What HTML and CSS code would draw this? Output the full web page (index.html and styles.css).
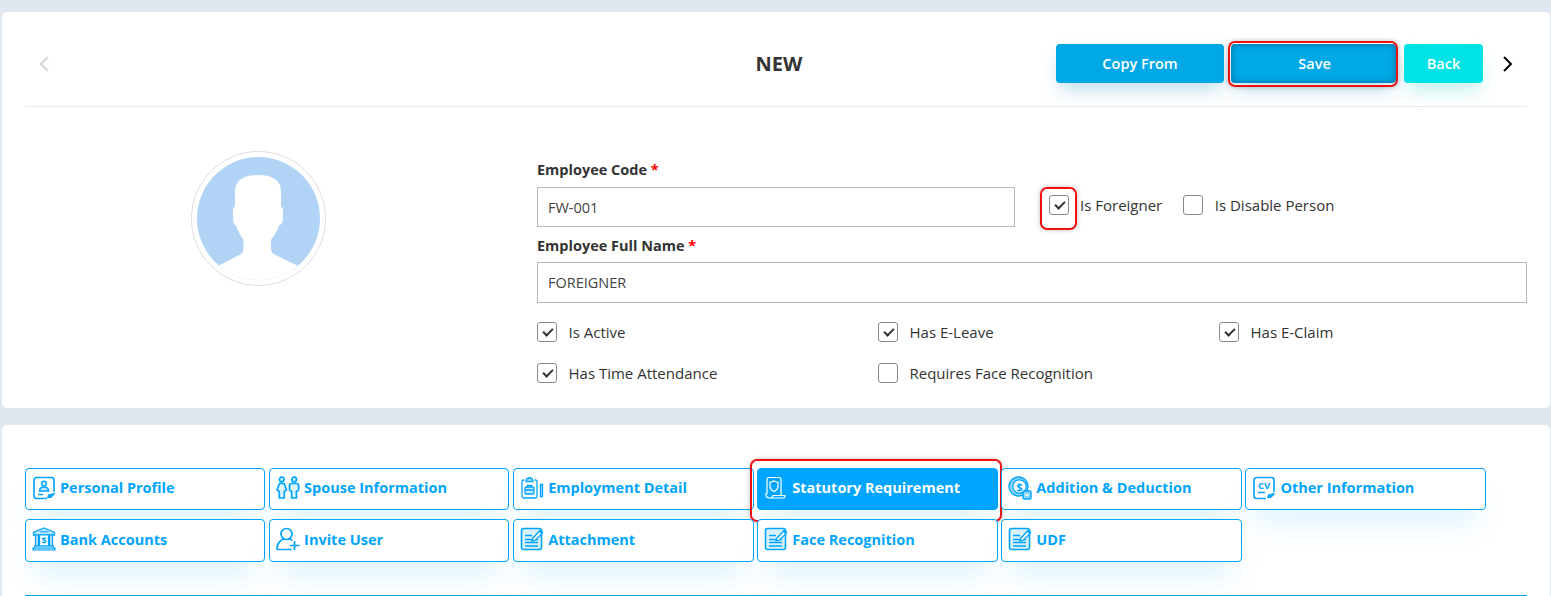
FILE: index.html
```html
<!DOCTYPE html>
<html lang="en">
<head>
    <meta charset="UTF-8">
    <meta name="viewport" content="width=device-width, initial-scale=1.0">
    <title>New Employee</title>
    <link rel="stylesheet" href="styles.css">
</head>
<body>
    <svg class="sprite" xmlns="http://www.w3.org/2000/svg">
        <symbol id="ic-note" viewBox="0 0 24 24">
            <rect x="1.500" y="1.500" width="20" height="21" rx="2" fill="#bfe6ff" fill-opacity=".6" stroke="currentColor" stroke-width="1.600"/>
            <path d="M5 8.500h7M5 12.500h13M5 15.500h13M5 19h13" fill="none" stroke="currentColor" stroke-width="1.600"/>
            <path d="M13 11l7-7.500 2.500 2.500-7 7-3.500 1z" fill="#fff" stroke="currentColor" stroke-width="1.300"/>
            <path d="M19 4.500l2.500 2.500 1.500-2-2-2z" fill="currentColor"/>
        </symbol>
        <symbol id="ic-person" viewBox="0 0 24 24">
            <path d="M15 22.500H4.500A2.500 2.500 0 0 1 2 20V4a2.500 2.500 0 0 1 2.500-2.500h15A2.500 2.500 0 0 1 22 4v12" fill="none" stroke="currentColor" stroke-width="1.600"/>
            <circle cx="12" cy="7.500" r="2.300" fill="none" stroke="currentColor" stroke-width="1.500"/>
            <path d="M7.500 15c0-3 1.800-4 4.500-4s4.500 1 4.500 4z" fill="#bfe6ff" stroke="currentColor" stroke-width="1.500"/>
            <path d="M6 18.500h5" stroke="currentColor" stroke-width="1.500"/>
            <path d="M15 22l1-3.500 6-1.500 1.500 0-1.500 2-3 3z" fill="currentColor"/>
        </symbol>
        <symbol id="ic-couple" viewBox="0 0 24 24">
            <g fill="#dff3ff" stroke="currentColor" stroke-width="1.700">
                <circle cx="5.800" cy="3.500" r="2.300"/>
                <circle cx="18.200" cy="3.500" r="2.300"/>
                <path d="M3.500 7.500h4.600L10.500 14 8.300 15.500V22H3.300V15.500L1 14z"/>
                <path d="M15.800 7.500h4.600c1.200 0 2.200 1 2.200 2v4.500l-2.200 1.500V22h-4.800V15.500L13.500 14V9.500c0-1 1-2 2.300-2z"/>
            </g>
        </symbol>
        <symbol id="ic-clipboard" viewBox="0 0 24 24">
            <g fill="none" stroke="currentColor" stroke-width="1.300">
                <path d="M4.500 4h-1A1.500 1.500 0 0 0 2 5.500v15A1.500 1.500 0 0 0 3.500 22h12a1.500 1.500 0 0 0 1.500-1.500v-15A1.500 1.500 0 0 0 15.500 4h-1"/>
                <path d="M6 5.500L7 2.500h1.500a1 1 0 0 1 2 0H12l1 3z" fill="#bfe6ff"/>
                <rect x="5" y="11" width="9" height="7" rx="1" fill="#bfe6ff"/>
                <path d="M7.500 11V9.500h4V11M5 14h9"/>
                <path d="M20.500 8.500h2v12h-2z" fill="#bfe6ff"/>
            </g>
        </symbol>
        <symbol id="ic-scroll" viewBox="0 0 24 24">
            <g fill="none" stroke="currentColor" stroke-width="1.200">
                <path d="M3 18V3.500a2 2 0 0 1 2-2h10a2 2 0 0 1 2 2V19"/>
                <path d="M6 22h13c1.500 0 2-1 2-2.500H9c0 1.500-.8 2.500-3 2.500S2 21 2 19v-1.500h1"/>
                <path d="M10 5l4 1.500v3.500c0 2.800-1.800 4.500-4 5.500-2.200-1-4-2.700-4-5.500V6.500z"/>
            </g>
        </symbol>
        <symbol id="ic-coin" viewBox="0 0 24 24">
            <circle cx="10.500" cy="10.500" r="9.500" fill="#8fd3ff" stroke="currentColor" stroke-width="1.400"/>
            <circle cx="11.500" cy="10.500" r="6.700" fill="#fff" stroke="currentColor" stroke-width="1.200"/>
            <text x="11.500" y="14.500" class="ic-glyph" text-anchor="middle">$</text>
            <rect x="15" y="15" width="8" height="8" rx="1.200" fill="#8fd3ff" stroke="currentColor" stroke-width="1.400"/>
            <path d="M17 19h4" stroke="#fff" stroke-width="1.200"/>
        </symbol>
        <symbol id="ic-cv" viewBox="0 0 24 24">
            <path d="M14 22.500H4.500A2.500 2.500 0 0 1 2 20V4a2.500 2.500 0 0 1 2.500-2.500h15A2.500 2.500 0 0 1 22 4v12" fill="none" stroke="currentColor" stroke-width="1.600"/>
            <text x="12" y="12.500" class="ic-cv-text" text-anchor="middle">CV</text>
            <path d="M6 16.500h7" stroke="currentColor" stroke-width="1.500"/>
            <path d="M15 22l1-3.500 6-1.500 1.500 0-1.500 2-3 3z" fill="currentColor"/>
        </symbol>
        <symbol id="ic-bank" viewBox="0 0 24 24">
            <path d="M12 1L22.500 5.500V8h-21V5.500z" fill="#bfe6ff" stroke="currentColor" stroke-width="1.300"/>
            <path d="M8 4.800h8" stroke="currentColor" stroke-width="1"/>
            <path d="M3.500 8h3v11h-3zM17.500 8h3v11h-3z" fill="#bfe6ff" stroke="currentColor" stroke-width="1.200"/>
            <path d="M7.500 8h9v11h-9z" fill="#fff" stroke="currentColor" stroke-width="1.200"/>
            <text x="12" y="16.500" class="ic-glyph ic-glyph-sm" text-anchor="middle">$</text>
            <path d="M2.500 19h19v2h-19zM1 21h22v2H1z" fill="#bfe6ff" stroke="currentColor" stroke-width="1.200"/>
        </symbol>
        <symbol id="ic-invite" viewBox="0 0 24 24">
            <g fill="none" stroke="currentColor" stroke-width="1.700">
                <circle cx="10.500" cy="7" r="5.500"/>
                <path d="M15.500 22.500H2c-.6 0-1-.4-1-1 0-5 3.500-8.800 7-9.500M13 12c1 .2 2 .7 3 1.500"/>
                <path d="M18.500 14v9M14 18.500h9.500"/>
            </g>
        </symbol>
    </svg>

    <section class="card top-card">
        <div class="page-head">
            <div class="head-left">
                <svg class="chev chev-prev" viewBox="0 0 10 16"><path d="M9 1L2 8l7 7"/></svg>
            </div>
            <h1 class="page-title">NEW</h1>
            <div class="head-actions">
                <button class="btn btn-blue btn-copy">Copy From</button>
                <button class="btn btn-blue btn-save">Save<span class="mark"></span></button>
                <button class="btn btn-cyan">Back</button>
                <svg class="chev chev-next" viewBox="0 0 10 16"><path d="M1 1l7 7-7 7"/></svg>
            </div>
        </div>

        <div class="emp-form">
            <div class="photo-col">
                <svg class="avatar" viewBox="191 151 135 135">
                    <circle cx="258.500" cy="218.500" r="67" fill="#fff" stroke="#dedede"/>
                    <clipPath id="avatar-clip"><circle cx="258.500" cy="218.500" r="61.500"/></clipPath>
                    <circle cx="258.500" cy="218.500" r="61.500" fill="#b1d3f5"/>
                    <path clip-path="url(#avatar-clip)" fill="#fff" d="M218 266L240 254.500Q243.500 252.500 243.500 248.500L243.500 240Q238 232 236 225.500Q233 224 233 218L233 212Q233 208 235 206L235 192Q235 175 258 175Q281 175 281 192L281 206Q283 208 283 212L283 218Q283 224 279 225.500Q277 232 271 240L271 248.500Q271 252.500 274.500 254.500L298 266L298 295L218 295Z"/>
                </svg>
            </div>
            <div class="field-col">
                <div class="code-row">
                    <div class="field field-code">
                        <label class="field-label">Employee Code <span class="req">*</span></label>
                        <input class="text-input" type="text" value="FW-001">
                    </div>
                    <div class="code-flags">
                        <label class="chk"><span class="chk-box-wrap"><input type="checkbox" checked><span class="mark"></span></span>Is Foreigner</label>
                        <label class="chk chk-wide"><input type="checkbox">Is Disable Person</label>
                    </div>
                </div>
                <div class="field field-name">
                    <label class="field-label">Employee Full Name <span class="req">*</span></label>
                    <input class="text-input text-input-tall" type="text" value="FOREIGNER">
                </div>
                <div class="flag-grid">
                    <label class="chk chk-wide"><input type="checkbox" checked>Is Active</label>
                    <label class="chk chk-wide"><input type="checkbox" checked>Has E-Leave</label>
                    <label class="chk chk-wide"><input type="checkbox" checked>Has E-Claim</label>
                    <label class="chk chk-wide"><input type="checkbox" checked>Has Time Attendance</label>
                    <label class="chk chk-wide"><input type="checkbox">Requires Face Recognition</label>
                </div>
            </div>
        </div>
    </section>

    <section class="card tab-card">
        <div class="tab-grid">
            <a class="tab"><svg class="tab-ic"><use href="#ic-person"/></svg>Personal Profile</a>
            <a class="tab"><svg class="tab-ic"><use href="#ic-couple"/></svg>Spouse Information</a>
            <a class="tab"><svg class="tab-ic"><use href="#ic-clipboard"/></svg>Employment Detail</a>
            <a class="tab tab-active"><svg class="tab-ic"><use href="#ic-scroll"/></svg>Statutory Requirement<span class="mark"></span></a>
            <a class="tab"><svg class="tab-ic"><use href="#ic-coin"/></svg>Addition &amp; Deduction</a>
            <a class="tab"><svg class="tab-ic"><use href="#ic-cv"/></svg>Other Information</a>
            <a class="tab"><svg class="tab-ic"><use href="#ic-bank"/></svg>Bank Accounts</a>
            <a class="tab"><svg class="tab-ic"><use href="#ic-invite"/></svg>Invite User</a>
            <a class="tab"><svg class="tab-ic"><use href="#ic-note"/></svg>Attachment</a>
            <a class="tab"><svg class="tab-ic"><use href="#ic-note"/></svg>Face Recognition</a>
            <a class="tab"><svg class="tab-ic"><use href="#ic-note"/></svg>UDF</a>
        </div>
        <div class="tab-rule"></div>
    </section>
</body>
</html>
```

FILE: styles.css
```css
* {
    box-sizing: border-box;
}
html, body {
    height: 100%;
}
body {
    margin: 0;
    padding: 12px 1px 0 2px;
    overflow: hidden;
    background: #dfe7ef;
    color: #333;
    font-family: "Open Sans", "Noto Sans", sans-serif;
    font-size: 15px;
}
.sprite {
    display: none;
}
.card {
    background: #fff;
    border-radius: 5px;
}

/* header */
.top-card {
    height: 396px;
    padding: 0 23px;
}
.page-head {
    display: grid;
    grid-template-columns: 1fr auto 1fr;
    align-items: center;
    padding: 32px 0 23px;
    border-bottom: 1px solid #e9ecef;
}
.head-left {
    display: flex;
    padding-left: 14px;
}
.page-title {
    margin: 0;
    padding-left: 6px;
    font-size: 20px;
    font-weight: 700;
    color: #333;
}
.head-actions {
    display: flex;
    justify-content: flex-end;
    align-items: center;
}
.chev {
    width: 10px;
    height: 16px;
    fill: none;
    stroke-width: 2;
}
.chev-prev {
    stroke: #d6d6d6;
}
.chev-next {
    stroke: #000;
    margin: 0 14px 0 20px;
}
.btn {
    position: relative;
    height: 39px;
    padding: 0;
    border: 0;
    border-radius: 4px;
    color: #fff;
    font-family: inherit;
    font-size: 14.500px;
    font-weight: 600;
}
.btn-blue {
    background: #00a8e6;
    box-shadow: 0 10px 20px -4px rgba(0, 130, 190, .28);
}
.btn-cyan {
    width: 79px;
    margin-left: 8px;
    background: #00e3e6;
    box-shadow: 0 10px 20px -4px rgba(0, 190, 190, .28);
}
.btn-copy {
    width: 168px;
}
.btn-save {
    width: 165px;
    margin-left: 7px;
    padding-left: 2px;
    box-shadow: inset 0 0 6px rgba(0, 50, 80, .55), 0 10px 20px -4px rgba(0, 130, 190, .28);
}

/* red annotation boxes */
.mark {
    position: absolute;
    border: 2px solid #ee1111;
    border-radius: 7px;
    box-shadow: 0 0 5px rgba(0, 0, 0, .25);
    pointer-events: none;
}
.btn-save .mark {
    inset: -3px -2px -4px -3px;
}
.chk-box-wrap .mark {
    inset: -8px -8px -15px -9px;
}
.tab-active .mark {
    inset: -10px -5px -13px -8px;
}

/* form */
.emp-form {
    display: flex;
}
.photo-col {
    width: 512px;
    padding: 44px 0 0 166px;
}
.avatar {
    display: block;
    width: 135px;
    height: 135px;
}
.field-col {
    flex: 1;
    padding-top: 53px;
    min-width: 0;
}
.code-row {
    display: flex;
    align-items: flex-end;
}
.field-code {
    width: 478px;
}
.code-flags {
    display: flex;
    gap: 21px;
    margin: 0 0 12px 34px;
}
.field-label {
    display: block;
    height: 20px;
    margin-bottom: 7px;
    line-height: 20px;
    font-size: 14.500px;
    font-weight: 700;
    color: #333;
}
.field-name {
    margin-top: 9px;
}
.field-name .field-label {
    margin-bottom: 6px;
}
.req {
    color: #f00;
}
.text-input {
    display: block;
    width: 100%;
    height: 40px;
    padding: 0 10px;
    border: 1px solid #b8b8b8;
    background: #fff;
    color: #444;
    font-family: inherit;
    font-size: 14.500px;
}
.text-input-tall {
    height: 41px;
}
.flag-grid {
    display: grid;
    grid-template-columns: repeat(3, 341px);
    row-gap: 21px;
    margin-top: 19px;
}
.chk {
    display: flex;
    align-items: center;
    gap: 11px;
    height: 20px;
    line-height: 20px;
    color: #333;
}
.chk-wide {
    gap: 11.500px;
}
.chk-box-wrap {
    position: relative;
    display: block;
    width: 20px;
    height: 20px;
}
.chk input {
    appearance: none;
    position: relative;
    display: block;
    width: 20px;
    height: 20px;
    margin: 0;
    background: #fff;
    border: 1px solid #8a8a8a;
    border-radius: 3px;
}
.chk input:checked::after {
    content: "";
    position: absolute;
    left: 5px;
    top: 5px;
    width: 8px;
    height: 4px;
    border-left: 2px solid #333;
    border-bottom: 2px solid #333;
    transform: rotate(-45deg);
}

/* tabs */
.tab-card {
    margin-top: 17px;
    height: 400px;
    padding: 43px 23px 0;
}
.tab-grid {
    display: grid;
    grid-template-columns: repeat(6, 240.400px);
    grid-template-rows: 42px 43px;
    column-gap: 3.700px;
    row-gap: 9px;
}
.tab {
    position: relative;
    display: flex;
    align-items: center;
    gap: 4px;
    padding: 0 0 3px 6px;
    background: #fff;
    border: 1px solid #00a5ff;
    border-radius: 4px;
    color: #00a5ff;
    font-size: 14.500px;
    font-weight: 700;
    box-shadow: 0 20px 30px -10px rgba(0, 165, 255, .18);
}
.tab-active {
    background: #00a5ff;
    color: #fff;
}
.tab-ic {
    flex: none;
    width: 24px;
    height: 24px;
    color: #00a5ff;
}
.tab-active .tab-ic {
    color: #fff;
}
.ic-glyph {
    font-family: "Open Sans", sans-serif;
    font-size: 11px;
    font-weight: 700;
    fill: currentColor;
}
.ic-glyph-sm {
    font-size: 9px;
}
.ic-cv-text {
    font-family: "Open Sans", sans-serif;
    font-size: 9.500px;
    font-weight: 700;
    fill: currentColor;
}
.tab-rule {
    margin-top: 33px;
    height: 1px;
    background: #00a8e8;
}
```
